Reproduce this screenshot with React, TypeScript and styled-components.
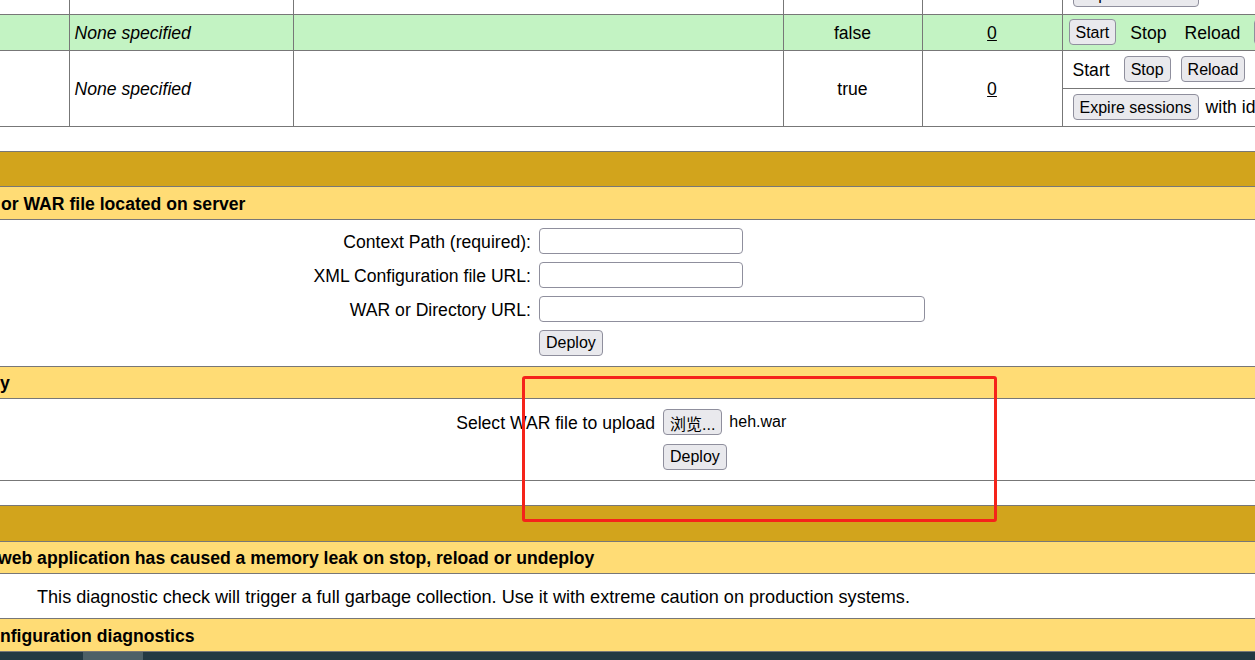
import { createGlobalStyle, styled } from "styled-components";

const GlobalStyle = createGlobalStyle`
  html, body {
    margin: 0;
    padding: 0;
    background: #fff;
  }
  body {
    font-family: "Liberation Sans", "Noto Sans CJK SC", Arial, sans-serif;
    font-size: 17.6px;
    color: #000;
  }
`;

const LINE = "#777777";

const Page = styled.div`
  position: relative;
  width: 1255px;
  height: 660px;
  overflow: hidden;
  display: flex;
  flex-direction: column;
`;

const AppTable = styled.table`
  border-collapse: collapse;
  table-layout: fixed;
  width: 1562px;
  flex-shrink: 0;

  & td:first-child {
    border-left: none;
  }
  & tr:first-child td {
    border-top: none;
  }
`;

const Row = styled.tr<{ $bg?: string; $h: number }>`
  height: ${({ $h }) => $h}px;
  background: ${({ $bg }) => $bg ?? "#fff"};
`;

const Cell = styled.td<{ $center?: boolean; $italic?: boolean }>`
  border: 1px solid ${LINE};
  padding: 2px 5px 0;
  text-align: ${({ $center }) => ($center ? "center" : "left")};
  font-style: ${({ $italic }) => ($italic ? "italic" : "normal")};
  vertical-align: middle;
  white-space: nowrap;
  overflow: hidden;
`;

const CommandCell = styled.td`
  border: 1px solid ${LINE};
  padding: 0;
  vertical-align: middle;
  white-space: nowrap;
  overflow: hidden;
`;

const Commands = styled.div<{ $pad: number }>`
  display: flex;
  align-items: center;
  gap: 10px;
  padding-left: ${({ $pad }) => $pad}px;
`;

const Clip = styled.div`
  height: 13px;
  overflow: hidden;
  display: flex;
  align-items: flex-end;
  padding-bottom: 6px;
  box-sizing: border-box;
`;

const ActionText = styled.span`
  padding: 2px 4px 0;
`;

const Inline = styled.span`
  display: flex;
  align-items: center;
  gap: 7px;
`;

const AppLink = styled.a`
  color: #000;
  text-decoration: underline;
`;

const Button = styled.button`
  height: 26px;
  padding: 1px 6px 0;
  box-sizing: border-box;
  font-family: inherit;
  font-size: 16px;
  color: #000;
  background: #e9e9ed;
  border: 1px solid #8f8f9d;
  border-radius: 4px;
  white-space: nowrap;
  flex-shrink: 0;
`;

const TextInput = styled.input<{ $w: number }>`
  width: ${({ $w }) => $w}px;
  height: 26px;
  box-sizing: border-box;
  border: 1px solid #8f8f9d;
  border-radius: 4px;
  background: #fff;
  font-family: inherit;
  font-size: 16px;
  padding: 0 4px;
`;

const Spacer = styled.div`
  height: 24px;
  flex-shrink: 0;
`;

const Section = styled.div`
  border-top: 1px solid ${LINE};
  flex-shrink: 0;

  & > * {
    border-bottom: 1px solid ${LINE};
  }
`;

const TitleBar = styled.div<{ $h: number }>`
  height: ${({ $h }) => $h}px;
  background: #d2a41c;
`;

const Header = styled.div<{ $h: number; $indent?: number }>`
  height: ${({ $h }) => $h - 3}px;
  padding-top: 3px;
  background: #ffdc75;
  font-weight: bold;
  display: flex;
  align-items: center;
  white-space: nowrap;
  text-indent: ${({ $indent }) => $indent ?? 0}px;
`;

const FormBody = styled.div<{ $pt: number; $pb: number }>`
  padding: ${({ $pt }) => $pt}px 0 ${({ $pb }) => $pb}px;
`;

const FormGrid = styled.div<{ $labelWidth: number; $rowGap: number }>`
  display: grid;
  grid-template-columns: ${({ $labelWidth }) => $labelWidth}px auto;
  column-gap: 8px;
  row-gap: ${({ $rowGap }) => $rowGap}px;
  align-items: center;
  justify-items: start;
`;

const Label = styled.label`
  justify-self: end;
  padding-top: 3px;
  white-space: nowrap;
`;

const FileName = styled.span`
  font-size: 16px;
  padding-top: 1px;
`;

const InfoRow = styled.div`
  height: 41px;
  padding: 3px 0 0 37px;
  display: flex;
  align-items: center;
  font-size: 18.1px;
  white-space: nowrap;
`;

const ScrollTrack = styled.div`
  margin-top: auto;
  height: 8px;
  flex-shrink: 0;
  background: #233943;
  display: flex;
`;

const ScrollThumb = styled.div`
  margin-left: 83px;
  width: 60px;
  background: #4d6067;
`;

const Annotation = styled.div`
  position: absolute;
  left: 522px;
  top: 376px;
  width: 475px;
  height: 146px;
  box-sizing: border-box;
  border: 3px solid #f5231a;
  border-radius: 3px;
  pointer-events: none;
`;

function ExpireSessions() {
  return (
    <Inline>
      <Button>Expire sessions</Button>
      <span>with idle ≥</span>
      <TextInput $w={40} defaultValue="30" />
      <span>minutes</span>
    </Inline>
  );
}

export default function App() {
  return (
    <>
      <GlobalStyle />
      <Page>
        <AppTable>
          <colgroup>
            <col style={{ width: 69 }} />
            <col style={{ width: 224 }} />
            <col style={{ width: 490 }} />
            <col style={{ width: 139 }} />
            <col style={{ width: 140 }} />
            <col style={{ width: 500 }} />
          </colgroup>
          <tbody>
            <Row $h={14}>
              <Cell />
              <Cell />
              <Cell />
              <Cell />
              <Cell />
              <CommandCell>
                <Clip>
                  <Commands $pad={10}>
                    <ExpireSessions />
                  </Commands>
                </Clip>
              </CommandCell>
            </Row>
            <Row $h={36} $bg="#c3f3c3">
              <Cell />
              <Cell $italic>None specified</Cell>
              <Cell />
              <Cell $center>false</Cell>
              <Cell $center>
                <AppLink href="#">0</AppLink>
              </Cell>
              <CommandCell>
                <Commands $pad={6}>
                  <Button>Start</Button>
                  <ActionText>Stop</ActionText>
                  <ActionText>Reload</ActionText>
                  <Button>Undeploy</Button>
                </Commands>
              </CommandCell>
            </Row>
            <Row $h={38}>
              <Cell rowSpan={2} />
              <Cell rowSpan={2} $italic>
                None specified
              </Cell>
              <Cell rowSpan={2} />
              <Cell rowSpan={2} $center>
                true
              </Cell>
              <Cell rowSpan={2} $center>
                <AppLink href="#">0</AppLink>
              </Cell>
              <CommandCell>
                <Commands $pad={6}>
                  <ActionText>Start</ActionText>
                  <Button>Stop</Button>
                  <Button>Reload</Button>
                  <Button>Undeploy</Button>
                </Commands>
              </CommandCell>
            </Row>
            <Row $h={38}>
              <CommandCell>
                <Commands $pad={10}>
                  <ExpireSessions />
                </Commands>
              </CommandCell>
            </Row>
          </tbody>
        </AppTable>

        <Spacer />

        <Section>
          <TitleBar $h={34} />
          <Header $h={32} $indent={1}>
            or WAR file located on server
          </Header>
          <FormBody $pt={8} $pb={10}>
            <FormGrid $labelWidth={531} $rowGap={8}>
              <Label>Context Path (required):</Label>
              <TextInput $w={204} />
              <Label>XML Configuration file URL:</Label>
              <TextInput $w={204} />
              <Label>WAR or Directory URL:</Label>
              <TextInput $w={386} />
              <span />
              <Button>Deploy</Button>
            </FormGrid>
          </FormBody>
          <Header $h={31}>y</Header>
          <FormBody $pt={10} $pb={10}>
            <FormGrid $labelWidth={655} $rowGap={9}>
              <Label>Select WAR file to upload</Label>
              <Inline>
                <Button>浏览...</Button>
                <FileName>heh.war</FileName>
              </Inline>
              <span />
              <Button>Deploy</Button>
            </FormGrid>
          </FormBody>
        </Section>

        <Spacer />

        <Section>
          <TitleBar $h={35} />
          <Header $h={31} $indent={-2}>
            web application has caused a memory leak on stop, reload or undeploy
          </Header>
          <InfoRow>
            This diagnostic check will trigger a full garbage collection. Use it
            with extreme caution on production systems.
          </InfoRow>
          <Header $h={32}>nfiguration diagnostics</Header>
        </Section>

        <ScrollTrack>
          <ScrollThumb />
        </ScrollTrack>

        <Annotation />
      </Page>
    </>
  );
}
